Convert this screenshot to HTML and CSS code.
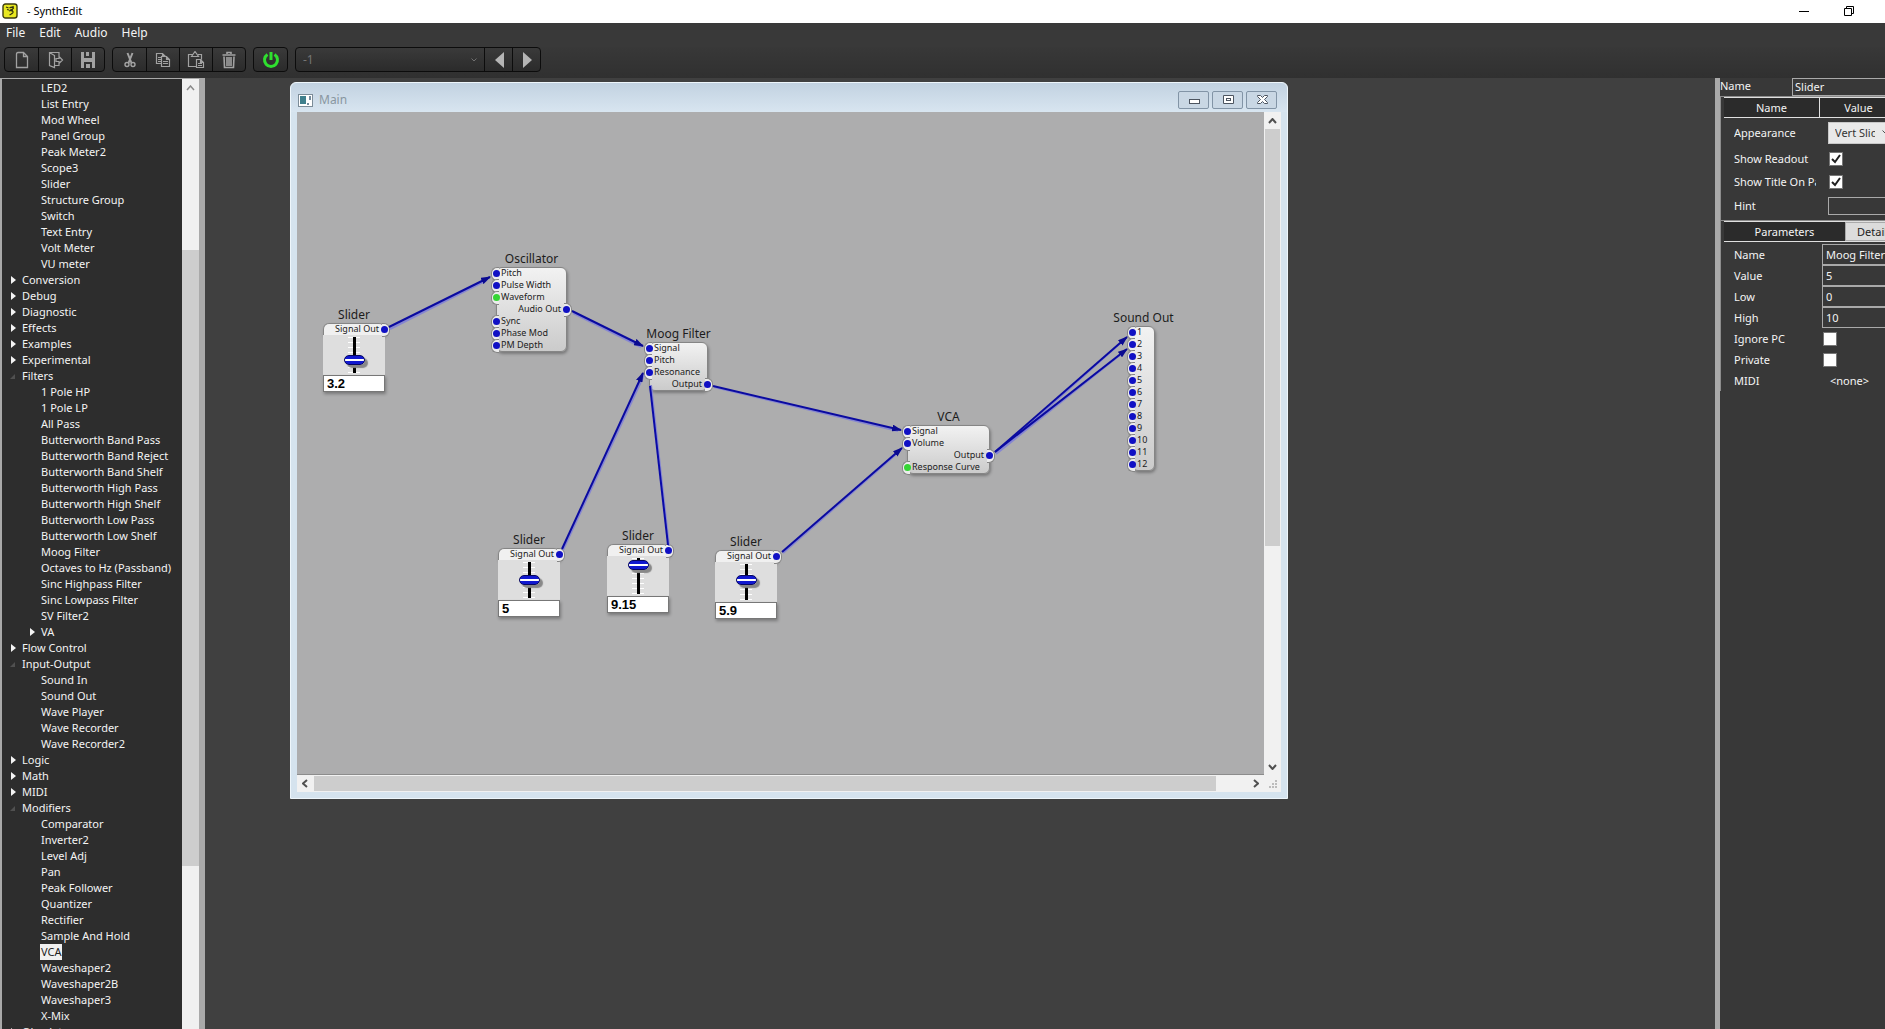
FILE: index.html
```html
<!DOCTYPE html>
<html lang="en">
<head>
<meta charset="utf-8">
<title>SynthEdit</title>
<link rel="stylesheet" href="styles.css">
</head>
<body>
<header class="titlebar">
  <svg class="app-icon" width="16" height="16" viewBox="0 0 16 16"><rect x="1" y="1" width="14" height="14" rx="2.5" fill="#e8e820" stroke="#3c3c10" stroke-width="1.4"/><path d="M4 4l2.500 1M5 6.500l2 .5M7.500 5c2-1.500 4-1 4 .2-.8 1.300-3 1.300-3.500 2.300 2 .5 3.500.5 3 2-.5 1-2 1.500-3.500 2.500M11.500 3l-1.500 2M7 8l4-1" fill="none" stroke="#33330c" stroke-width="1.200"/></svg>
  <h1 class="app-title">- SynthEdit</h1>
  <div class="sys-buttons">
    <button class="sys" aria-label="Minimize"><svg width="10" height="10"><path d="M0 5.5h10" stroke="#000"/></svg></button>
    <button class="sys" aria-label="Restore"><svg width="10" height="10" fill="none" stroke="#000"><path d="M.5 2.500h7v7h-7zM2.500 2.500v-2h7v7h-2"/></svg></button>
  </div>
</header>
<nav class="menubar"><button>File</button><button>Edit</button><button>Audio</button><button>Help</button></nav>
<div class="toolbar">
  <div class="group">
    <button aria-label="New"><svg width="18" height="18" fill="none" stroke="#a2a2a2" stroke-width="1.300"><path d="M5 1.500h5.500l4 4v11h-11v-13q0-2 1.500-2M10.500 1.500v4h4"/></svg></button>
    <button aria-label="Open"><svg width="18" height="18" fill="none" stroke="#a2a2a2" stroke-width="1.200"><path d="M13 5.500v-4H3.500v13l5 2v-12l-5-3M8.500 14.500H13v-3M10 7.500h3v-2l3.500 3.500-3.500 3.500v-2h-3z"/></svg></button>
    <button aria-label="Save"><svg width="18" height="18" fill="#a2a2a2"><path fill-rule="evenodd" d="M2 1h14v16H2zM5 1v6h8V1h-3v4H7V1zM5 11v6h2v-4h4v4h2v-6z"/></svg></button>
  </div>
  <div class="group">
    <button aria-label="Cut"><svg width="18" height="18" fill="none" stroke="#a2a2a2" stroke-width="1.400"><path d="M6.500 2l4 10M11.500 2l-4 10" stroke-width="2"/><circle cx="6" cy="13.500" r="2"/><circle cx="12" cy="13.500" r="2"/></svg></button>
    <button aria-label="Copy"><svg width="18" height="18" fill="none" stroke="#a2a2a2" stroke-width="1.200"><path d="M7 12.500H2.500v-10h6l3 3M8.500 2.500v3M4 6.500h3M4 8.500h3M4 10.500h3M7.500 5.500h5l3 3v7h-8zM12.500 5.500v3h3M9 10.500h5M9 12.500h5"/></svg></button>
    <button aria-label="Paste"><svg width="18" height="18" fill="none" stroke="#a2a2a2" stroke-width="1.200"><path d="M9 15.500H1.500v-12H6M11 3.500h3.500v5M4.500 5.500L8 .5l3.500 5zM9.500 8.500h4l3 3v5h-7zM13.500 8.500v3h3M11 12.500h4M11 14.500h4"/></svg></button>
    <button aria-label="Delete"><svg width="18" height="18" fill="none" stroke="#a2a2a2" stroke-width="1.600"><path d="M2.500 4h13M7 3V1.500h4V3M4 5.500l.5 11h9l.5-11M7 6v9M9 6v9M11 6v9"/></svg></button>
  </div>
  <div class="group">
    <button aria-label="Audio power"><svg width="18" height="18" fill="none" stroke="#2fe02f" stroke-width="3"><path d="M9 1v8M5.500 3.500a6.500 6.500 0 1 0 7 0"/></svg></button>
  </div>
  <div class="group">
    <select class="preset" aria-label="Preset" disabled><option>-1</option></select>
    <button class="step" aria-label="Previous"><svg width="10" height="16"><path d="M10 0v16L1 8z" fill="#b5b5b5"/></svg></button>
    <button class="step" aria-label="Next"><svg width="10" height="16"><path d="M1 0v16l9-8z" fill="#b5b5b5"/></svg></button>
  </div>
</div>

<main class="main">
  <aside class="sidebar">
    <ul class="tree">
      <li><ul>
        <li>LED2</li><li>List Entry</li><li>Mod Wheel</li><li>Panel Group</li><li>Peak Meter2</li><li>Scope3</li><li>Slider</li><li>Structure Group</li><li>Switch</li><li>Text Entry</li><li>Volt Meter</li><li>VU meter</li>
      </ul></li>
      <li class="closed">Conversion</li>
      <li class="closed">Debug</li>
      <li class="closed">Diagnostic</li>
      <li class="closed">Effects</li>
      <li class="closed">Examples</li>
      <li class="closed">Experimental</li>
      <li class="open">Filters<ul>
        <li>1 Pole HP</li><li>1 Pole LP</li><li>All Pass</li><li>Butterworth Band Pass</li><li>Butterworth Band Reject</li><li>Butterworth Band Shelf</li><li>Butterworth High Pass</li><li>Butterworth High Shelf</li><li>Butterworth Low Pass</li><li>Butterworth Low Shelf</li><li>Moog Filter</li><li>Octaves to Hz (Passband)</li><li>Sinc Highpass Filter</li><li>Sinc Lowpass Filter</li><li>SV Filter2</li><li class="closed">VA</li>
      </ul></li>
      <li class="closed">Flow Control</li>
      <li class="open">Input-Output<ul>
        <li>Sound In</li><li>Sound Out</li><li>Wave Player</li><li>Wave Recorder</li><li>Wave Recorder2</li>
      </ul></li>
      <li class="closed">Logic</li>
      <li class="closed">Math</li>
      <li class="closed">MIDI</li>
      <li class="open">Modifiers<ul>
        <li>Comparator</li><li>Inverter2</li><li>Level Adj</li><li>Pan</li><li>Peak Follower</li><li>Quantizer</li><li>Rectifier</li><li>Sample And Hold</li><li><span class="selected">VCA</span></li><li>Waveshaper2</li><li>Waveshaper2B</li><li>Waveshaper3</li><li>X-Mix</li>
      </ul></li>
      <li class="closed">Obsolete</li>
    </ul>
    <div class="tree-scroll">
      <svg width="9" height="6" fill="none" stroke="#8a8a8a" stroke-width="1.500"><path d="M1 5l3.500-4L8 5"/></svg>
      <div class="thumb"></div>
    </div>
  </aside>

  <section class="desktop">
    <div class="window">
      <div class="window-title">
        <svg width="15" height="13"><rect x=".5" y=".5" width="14" height="12" fill="#fff" stroke="#7c8c98"/><rect x="2" y="2" width="6" height="8" fill="#3f7f8c"/><path d="M12 2v4M9 10h2" stroke="#47657c" stroke-width="1.500"/></svg>
        <h2>Main</h2>
        <button aria-label="Minimize"><svg width="14" height="12" fill="#fff" stroke="#4d5560"><rect x="2.500" y="5.500" width="10" height="4"/></svg></button>
        <button aria-label="Maximize"><svg width="14" height="12" fill="#fff" stroke="#4d5560"><path d="M2.500 1.500h10v8h-10z"/><rect x="5.500" y="4.500" width="4" height="2"/></svg></button>
        <button aria-label="Close"><svg width="14" height="12" fill="#fff" stroke="#4d5560"><path d="M2.500 1.500h3l2 2 2-2h3v1l-3 3 3 3v1h-3l-2-2-2 2h-3v-1l3-3-3-3z"/></svg></button>
      </div>
      <div class="window-body">
        <div class="canvas">
          <article class="node oscillator"><h3>Oscillator</h3><ul>
            <li class="in">Pitch</li><li class="in">Pulse Width</li><li class="in green">Waveform</li><li class="out">Audio Out</li><li class="in">Sync</li><li class="in">Phase Mod</li><li class="in">PM Depth</li></ul></article>
          <article class="node moog"><h3>Moog Filter</h3><ul>
            <li class="in">Signal</li><li class="in">Pitch</li><li class="in">Resonance</li><li class="out">Output</li></ul></article>
          <article class="node vca"><h3>VCA</h3><ul>
            <li class="in">Signal</li><li class="in">Volume</li><li class="out">Output</li><li class="in green">Response Curve</li></ul></article>
          <article class="node sound-out"><h3>Sound Out</h3><ul>
            <li class="in">1</li><li class="in">2</li><li class="in">3</li><li class="in">4</li><li class="in">5</li><li class="in">6</li><li class="in">7</li><li class="in">8</li><li class="in">9</li><li class="in">10</li><li class="in">11</li><li class="in">12</li></ul></article>
          <article class="node slider s1"><h3>Slider</h3><ul><li class="out">Signal Out</li></ul>
            <div class="panel"><input type="range" min="0" max="10" step="0.01" value="3.2" aria-label="Pitch slider"></div><input class="readout" value="3.2" aria-label="Pitch value"></article>
          <article class="node slider s2"><h3>Slider</h3><ul><li class="out">Signal Out</li></ul>
            <div class="panel"><input type="range" min="0" max="10" step="0.01" value="5" aria-label="Resonance slider"></div><input class="readout" value="5" aria-label="Resonance value"></article>
          <article class="node slider s3"><h3>Slider</h3><ul><li class="out">Signal Out</li></ul>
            <div class="panel"><input type="range" min="0" max="10" step="0.01" value="9.15" aria-label="Filter pitch slider"></div><input class="readout" value="9.15" aria-label="Filter pitch value"></article>
          <article class="node slider s4"><h3>Slider</h3><ul><li class="out">Signal Out</li></ul>
            <div class="panel"><input type="range" min="0" max="10" step="0.01" value="5.9" aria-label="Volume slider"></div><input class="readout" value="5.9" aria-label="Volume value"></article>
          <svg class="wires" width="967" height="662">
            <defs><marker id="tip" viewBox="0 0 10 7" markerWidth="10" markerHeight="7" refX="9" refY="3.500" orient="auto" markerUnits="userSpaceOnUse"><path d="M0 0l10 3.500L0 7z" fill="#0a0a90"/></marker></defs>
            <g class="glow"><path d="M93 217L190 168M276 201L344 235M417 275L601 319M266 438L347 263M372 434L354 273M486 441L604 338M699 342L828 227M699 342L828 239"/></g>
            <g class="wire">
              <path d="M92 215L193 165"/><path d="M275 199L346 234"/><path d="M416 274L604 318"/><path d="M265 437L346 261"/><path d="M485 440L605 336"/><path d="M698 340L830 225"/><path d="M698 340L830 237"/>
            </g>
            <path d="M371 433L353 274" fill="none" stroke="#0a0aa8" stroke-width="2"/>
          </svg>
        </div>
        <div class="vscroll">
          <svg width="9" height="6" fill="none" stroke="#505050" stroke-width="2"><path d="M1 5l3.500-4L8 5"/></svg>
          <div class="thumb"></div><i></i>
          <svg width="9" height="6" fill="none" stroke="#505050" stroke-width="2"><path d="M1 1l3.500 4L8 1"/></svg>
        </div>
        <div class="hscroll">
          <svg width="6" height="9" fill="none" stroke="#505050" stroke-width="2"><path d="M5 1L1 4.500 5 8"/></svg>
          <div class="thumb"></div><i></i>
          <svg width="6" height="9" fill="none" stroke="#505050" stroke-width="2"><path d="M1 1l4 3.500L1 8"/></svg>
        </div>
        <svg class="grip" width="16" height="16" fill="#bcbcbc"><path d="M11 5h2v2h-2zM8 8h2v2h-2zM11 8h2v2h-2zM5 11h2v2h-2zM8 11h2v2h-2zM11 11h2v2h-2z"/></svg>
      </div>
    </div>
  </section>

  <aside class="inspector">
    <div class="object-name"><label for="obj">Name</label><input id="obj" value="Slider"></div>
    <section class="props">
      <div class="head cols"><span>Name</span><span>Value</span></div>
      <div class="rows">
        <label for="appearance">Appearance</label><select id="appearance"><option>Vert Slider</option></select>
        <label for="readout">Show Readout</label><input id="readout" type="checkbox" checked>
        <label for="title">Show Title On Panel</label><input id="title" type="checkbox" checked>
        <label for="hint">Hint</label><input id="hint" class="field" value="">
      </div>
    </section>
    <section class="props">
      <div class="head tabs"><button class="current">Parameters</button><button class="tab">Details</button></div>
      <div class="params">
        <label for="pname">Name</label><input id="pname" class="field" value="Moog Filter">
        <label for="pvalue">Value</label><input id="pvalue" class="field" value="5">
        <label for="plow">Low</label><input id="plow" class="field" value="0">
        <label for="phigh">High</label><input id="phigh" class="field" value="10">
        <label for="ppc">Ignore PC</label><input id="ppc" type="checkbox">
        <label for="ppriv">Private</label><input id="ppriv" type="checkbox">
        <label for="pmidi">MIDI</label><output id="pmidi">&lt;none&gt;</output>
      </div>
    </section>
  </aside>
</main>
</body>
</html>
```
FILE: styles.css
```css
* { box-sizing: border-box; }
body {
  margin: 0;
  height: 100vh;
  display: flex;
  flex-direction: column;
  overflow: hidden;
  background: #404040;
  color: #f4f4f4;
  font: 11px/16px "Noto Sans", "Open Sans", sans-serif;
}
button, input, select { font: inherit; color: inherit; margin: 0; padding: 0; border: 0; background: none; border-radius: 0; }
h1, h2, h3 { margin: 0; font: inherit; }
ul { list-style: none; margin: 0; padding: 0; }
svg { display: block; flex: none; }

/* Application frame */
.titlebar { flex: none; height: 23px; display: flex; align-items: center; background: #fff; color: #000; padding: 0 31px 1px 2px; }
.app-icon { margin-right: 9px; }
.sys-buttons { margin-left: auto; display: flex; gap: 35px; }
.sys { display: block; }
.menubar { flex: none; height: 24px; padding: 2px 6px; display: flex; align-items: flex-start; gap: 14px; background: #393939; font-size: 12px; }
.toolbar { flex: none; height: 31px; padding: 0 4px 6px; display: flex; gap: 7px; background: linear-gradient(#383838, #303030); }
.group { display: flex; border: 1px solid #0c0c0c; border-radius: 4px; overflow: hidden; background: linear-gradient(#3a3a3a, #2b2b2b); }
.group > * { width: 33px; display: grid; place-items: center; border-left: 1px solid #0c0c0c; }
.group > :first-child { border-left: 0; }
.group .step { width: 28px; }
.group .preset { width: 188px; padding-left: 7px; font-size: 12px; color: #757575; opacity: 1; appearance: none; display: block;
  background: url("data:image/svg+xml,%3Csvg xmlns='http://www.w3.org/2000/svg' width='6' height='4' fill='none' stroke='%23707070'%3E%3Cpath d='M.5.5L3 3 5.500.5'/%3E%3C/svg%3E") no-repeat right 7px center; }
.main { flex: 1; min-height: 0; display: flex; }

/* Module tree */
.sidebar { flex: none; width: 205px; display: flex; border: solid #a9a9a9; border-width: 1px 6px 0 2px; background: #2d2d2d; overflow: hidden; }
.tree { flex: 1; padding: 1px 0 0 20px; white-space: nowrap; }
.tree ul { padding-left: 19px; }
.tree li { position: relative; }
.tree .closed::before { content: ""; position: absolute; left: -11px; top: 4px; border: 4px solid transparent; border-left: 5px solid #f4f4f4; border-right: 0; }
.tree .open::before { content: ""; position: absolute; left: -12px; top: 6px; border-left: 5px solid transparent; border-bottom: 5px solid #505050; }
.selected { display: inline-block; margin-left: -1px; padding: 0 1px; background: #f0f0f0; color: #222; vertical-align: top; }
.tree-scroll { width: 17px; background: #f0f0f0; display: flex; flex-direction: column; align-items: center; padding-top: 6px; }
.tree-scroll .thumb { width: 17px; height: 616px; margin-top: 159px; background: #cdcdcd; flex: none; }

/* Document window */
.desktop { flex: 1; position: relative; overflow: hidden; }
.window { position: absolute; left: 85px; top: 4px; width: 998px; height: 717px; padding: 0 6px 6px; border: 1px solid #eef6fb; border-radius: 6px 6px 0 0; background: #d5e3ee; display: flex; flex-direction: column; }
.window-title { flex: none; height: 29px; margin: 0 -6px; padding: 5px 10px 0 7px; border-radius: 6px 6px 0 0; display: flex; align-items: center; gap: 3px; background: linear-gradient(#c2d2e1, #d8e5f0); color: #8996a0; font-size: 12px; }
.window-title h2 { flex: 1; padding-left: 3px; }
.window-title button { width: 31px; height: 18px; border: 1px solid #8294a6; border-radius: 2px; display: grid; place-items: center; background: #c9d7e4; }
.window-body { flex: 1; min-height: 0; display: grid; grid-template: 1fr 17px / 1fr 17px; background: #f1f1f1; }
.canvas { position: relative; overflow: hidden; background: #adadae; border-bottom: 1px solid #8c8c8c; }
.vscroll { display: flex; flex-direction: column; align-items: center; padding: 6px 0 5px; }
.vscroll .thumb { width: 15px; height: 417px; margin-top: 5px; background: #cdcdcd; }
.hscroll { display: flex; align-items: center; padding: 0 5px; }
.hscroll .thumb { height: 15px; width: 902px; margin-left: 6px; background: #cdcdcd; }
.vscroll i, .hscroll i { flex: 1; }

/* Modules on the canvas */
.node { position: absolute; color: #1c1c1c; font-size: 9px; line-height: 12px; }
.node h3 { font-size: 12px; line-height: 18px; height: 17px; white-space: nowrap; display: flex; justify-content: center; }
.node ul { border: 1px solid #858585; border-radius: 6px; background: linear-gradient(#f2f2f2, #cbcbcb); box-shadow: 1px 2px 3px rgba(0, 0, 0, .3); }
.node li { position: relative; height: 12px; padding: 0 5px 0 4px; white-space: nowrap; }
.node li:first-child { margin-top: -1px; }
.node .out { text-align: right; }
.node li::before { content: ""; position: absolute; top: 0; left: -6px; width: 7px; height: 12px; border: 1px solid #858585; border-right: 0; border-radius: 6px 0 0 6px; background: #ececec; }
.node li::after { content: ""; position: absolute; top: 3px; left: -4px; width: 7px; height: 7px; border-radius: 50%; background: #1010c4; }
.node .out::before { left: auto; right: -6px; border: 1px solid #858585; border-left: 0; border-radius: 0 6px 6px 0; }
.node .out::after { left: auto; right: -4px; }
.node .green::after { background: #35d535; }
.oscillator { left: 199px; top: 138px; width: 71px; }
.moog { left: 352px; top: 213px; width: 59px; }
.vca { left: 610px; top: 296px; width: 83px; }
.sound-out { left: 835px; top: 197px; width: 23px; }
.slider { width: 62px; }
.slider ul { border-bottom: 0; border-radius: 6px 6px 0 0; background: #f0f0f0; }
.s1 { left: 26px; top: 194px; }
.s2 { left: 201px; top: 419px; }
.s3 { left: 310px; top: 415px; }
.s4 { left: 418px; top: 421px; }
.panel { height: 40px; padding-top: 2px; display: flex; justify-content: center; background: repeating-linear-gradient(#fff 0 1px, transparent 1px 5px) center / 12px 36px no-repeat #dedede; }
.panel input { appearance: none; writing-mode: vertical-lr; direction: rtl; width: 21px; height: 36px; background: linear-gradient(#000, #000) center / 3px 100% no-repeat; }
.panel input::-webkit-slider-thumb { appearance: none; width: 21px; height: 10px; border: 1px solid #060660; border-radius: 5px; background: linear-gradient(#1018d0 3px, #fff 3px 5px, #1018d0 5px); box-shadow: 3px 3px 1px #888; }
.readout { display: block; width: 62px; height: 17px; padding: 0 3px; border: 1px solid #777; background: #fff; color: #000; font: bold 13px/15px "Liberation Sans", Arial, sans-serif; box-shadow: 1px 2px 3px rgba(0, 0, 0, .3); }
.wires { position: absolute; left: 0; top: 0; fill: none; }
.glow path { stroke: #8686d2; stroke-width: 2px; }
.wire path { stroke: #0a0aa0; stroke-width: 2px; marker-end: url(#tip); }

/* Inspector */
.inspector { flex: none; width: 170px; overflow: hidden; border-left: 5px solid #a9a9a9; background: #383838; white-space: nowrap; }
.object-name { display: flex; height: 18px; width: 220px; }
.object-name label { flex: none; width: 72px; }
.object-name input { flex: 1; min-width: 0; border: 1px solid #a9a9a9; padding: 0 2px; }
.props { width: 220px; border-top: 1px solid #8c8c8c; border-left: 1px solid #8c8c8c; padding-left: 3px; }
.head { height: 21px; display: flex; border: solid #e0e0e0; border-width: 1px 0; background: #2b2b2b; }
.cols span { width: 95px; text-align: center; line-height: 19px; }
.cols span + span { border-left: 1px solid #e0e0e0; width: 78px; }
.rows { display: grid; grid-template-columns: 82px 1fr; grid-template-rows: 29px 23px 23px 26px; column-gap: 12px; align-items: center; padding: 0 0 1px 10px; }
.rows label { overflow: hidden; }
.rows select { width: 70px; height: 22px; padding: 0 22px 0 6px; appearance: none; border: 1px solid #c8c8c8; color: #333; text-overflow: clip;
  background: url("data:image/svg+xml,%3Csvg xmlns='http://www.w3.org/2000/svg' width='8' height='5' fill='none' stroke='%23505050'%3E%3Cpath d='M.5.5L4 4 7.500.5'/%3E%3C/svg%3E") no-repeat right 7px center #e9e9e9; }
.field { height: 18px; border: 1px solid #a9a9a9; padding: 0 3px; width: 100%; }
input[type="checkbox"] { appearance: none; width: 14px; height: 14px; margin-left: 1px; border: 1px solid #777; background: #fff; }
input[type="checkbox"]:checked { background: url("data:image/svg+xml,%3Csvg xmlns='http://www.w3.org/2000/svg' width='12' height='12' fill='none' stroke='%23202020' stroke-width='2'%3E%3Cpath d='M2 6l3 3 5-7'/%3E%3C/svg%3E") center no-repeat #fff; }
.tabs .current { width: 121px; }
.tabs .tab { flex: 1; padding-left: 11px; text-align: left; background: #dcdcdc; color: #222; border: 1px solid #aaa; }
.params { display: grid; grid-template-columns: 88px 1fr; grid-auto-rows: 21px; align-items: center; padding: 2px 0 0 10px; }
.params .field { height: 21px; }
.params output { padding-left: 8px; }
```
